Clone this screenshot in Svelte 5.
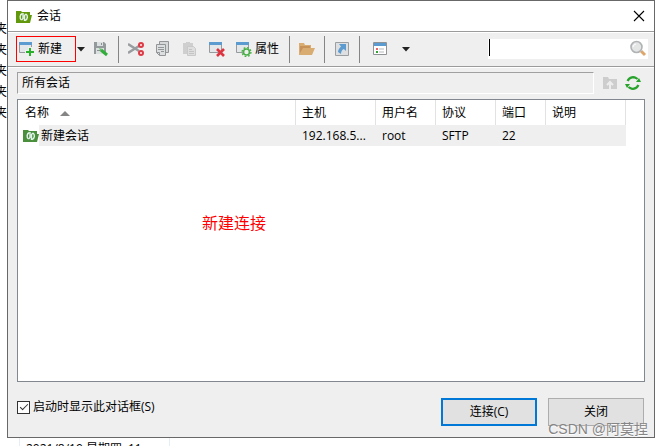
<script>
  let query = '';
  let showOnStart = true;

  const backRows = [1, 2, 3, 4, 5];

  const sessions = [
    { name: '新建会话', host: '192.168.5...', user: 'root', protocol: 'SFTP', port: 22, note: '' },
  ];
</script>

{#snippet logo(color)}
  <svg width="16" height="13" viewBox="0 0 16 13" aria-hidden="true">
    <path d="M0 1h5l1 1h8v3h2l-2 8H0z" fill={color} />
    <path d="M7 3v5.500L5.500 10M8.500 11V5.500L10 4" fill="none" stroke="#e2f3ee" stroke-width="1.400" />
    <path d="M6.500 3.500C3.500 4.500 3.500 8.500 5.500 10M9 10.500C12 9.500 12 5.500 10 4" fill="none" stroke="#e2f3ee" stroke-width="1.400" />
  </svg>
{/snippet}

<div class="desktop">
  <div class="behind-list">
    {#each backRows as row (row)}
      <span>夹</span>
    {/each}
  </div>

  <main class="dialog">
    <header class="titlebar">
      {@render logo('#62980c')}
      <h1>会话</h1>
      <button class="close" aria-label="关闭窗口">
        <svg width="12" height="12" viewBox="0 0 12 12"><path d="M1 1l10 10M11 1L1 11" stroke="#000" stroke-width="1.1" /></svg>
      </button>
    </header>

    <div class="toolbar">
      <button class="new">
        <svg width="16" height="16" viewBox="0 0 16 16">
          <path d="M.5 1.500h12v10H.5z" fill="#e4e7e9" stroke="#979b9d" />
          <path d="M0 1h13v3H0z" fill="#5b9bd0" />
          <path d="M11 6v9M6 11h9" stroke="#efefef" stroke-width="4" />
          <path d="M11 7v8M7 11h8" stroke="#2bb02b" stroke-width="2" />
        </svg>
        新建
      </button>
      <button class="drop" aria-label="新建选项">
        <svg width="8" height="5" viewBox="0 0 8 5"><path d="M0 0h8L4 4.500z" fill="#222" /></svg>
      </button>
      <button class="tool" aria-label="另存为">
        <svg width="16" height="16" viewBox="0 0 16 16">
          <path d="M1 1h10l2 2v10H1z" fill="#94999b" />
          <path d="M4 1h6v4H4zM3 7h8v6H3z" fill="#dde0e1" />
          <path d="M8 2h1v2H8zM4 9h6v1H4z" fill="#8a8f91" />
          <path d="M8 9l6 5" stroke="#32ae3b" stroke-width="3" />
          <path d="M6 7l3.500 1L7.500 10z" fill="#62c46a" />
        </svg>
      </button>
      <i class="sep"></i>
      <button class="tool" aria-label="剪切">
        <svg width="16" height="16" viewBox="0 0 16 16">
          <path d="M0 3l11 7M0 12l11-7" stroke="#999d9f" stroke-width="2.400" />
          <circle cx="13" cy="4" r="2" fill="none" stroke="#dd3a45" stroke-width="2" />
          <circle cx="13" cy="12" r="2" fill="none" stroke="#dd3a45" stroke-width="2" />
        </svg>
      </button>
      <button class="tool" aria-label="复制">
        <svg width="16" height="16" viewBox="0 0 16 16">
          <path d="M4.500.500h9v11h-9z" fill="#d5d7d8" stroke="#929698" />
          <path d="M1.500 3.500h9v11h-6l-3-3z" fill="#dcdedf" stroke="#929698" />
          <path d="M3 6.500h6M3 8.500h6M6 10.500h3M1.500 11.500h3v3" stroke="#929698" fill="none" />
        </svg>
      </button>
      <button class="tool" aria-label="粘贴" disabled>
        <svg width="16" height="16" viewBox="0 0 16 16">
          <path d="M1 2h3V1h4v1h3v11H1z" fill="#cfcfcf" />
          <path d="M5.500 5.500h6l2 2v7h-8z" fill="#dedede" stroke="#c9c9c9" />
          <path d="M7 8.500h3M7 10.500h5M7 12.500h5" stroke="#c4c4c4" />
        </svg>
      </button>
      <button class="tool" aria-label="删除">
        <svg width="16" height="16" viewBox="0 0 16 16">
          <path d="M.5 1.500h12v10H.5z" fill="#e4e7e9" stroke="#979b9d" />
          <path d="M0 1h13v3H0z" fill="#5b9bd0" />
          <path d="M8 8l7 7M15 8l-7 7" stroke="#dc3440" stroke-width="2.600" />
        </svg>
      </button>
      <button class="tool labelled">
        <svg width="16" height="16" viewBox="0 0 16 16">
          <path d="M.5 1.500h12v10H.5z" fill="#e4e7e9" stroke="#979b9d" />
          <path d="M0 1h13v3H0z" fill="#5b9bd0" />
          <circle cx="10.500" cy="11" r="3" fill="#efefef" stroke="#49b047" stroke-width="1.600" />
          <circle cx="10.500" cy="11" r="4.400" fill="none" stroke="#49b047" stroke-width="1.400" stroke-dasharray="1.700 1.750" />
        </svg>
        属性
      </button>
      <i class="sep"></i>
      <button class="tool" aria-label="打开文件夹">
        <svg width="16" height="16" viewBox="0 0 16 16">
          <path d="M0 2h5l1 2h6v3h4l-3 7H0z" fill="#d9ac72" />
          <path d="M1 5h10v2H4l-3 5z" fill="#c7915a" />
        </svg>
      </button>
      <i class="sep"></i>
      <button class="tool" aria-label="快捷方式">
        <svg width="16" height="16" viewBox="0 0 16 16">
          <path d="M1.500 1.500h13v13h-13z" fill="#dedfe0" stroke="#9b9fa1" />
          <path d="M5 3h7v7L9.800 8c-2 1-2.600 2.500-2.800 5L4 11c.3-2.500 1.300-4 3-5.500z" fill="#5b9bd0" />
        </svg>
      </button>
      <i class="sep"></i>
      <button class="tool view" aria-label="视图">
        <svg width="16" height="16" viewBox="0 0 16 16">
          <path d="M1.500 1.500h13v12h-13z" fill="#fff" stroke="#8f9395" />
          <path d="M2 2h12v3H2z" fill="#5b9bd0" />
          <path d="M4 7h2v2H4z" fill="#ed6464" />
          <path d="M4 10h2v2H4z" fill="#2fa32f" />
          <path d="M7 8h5M7 11h5" stroke="#b5b8b9" />
        </svg>
      </button>
      <button class="drop wide" aria-label="视图选项">
        <svg width="8" height="5" viewBox="0 0 8 5"><path d="M0 0h8L4 4.500z" fill="#222" /></svg>
      </button>
      <div class="search">
        <i class="caret"></i>
        <input type="text" bind:value={query} aria-label="搜索" />
        <svg width="18" height="18" viewBox="0 0 18 18" aria-hidden="true">
          <path d="M11 11l4 4" stroke="#dda66b" stroke-width="3" />
          <circle cx="6.500" cy="7" r="5.500" fill="#e4e5e5" stroke="#b0b3b4" stroke-width="1.600" />
          <path d="M3 7a3.500 3.500 0 0 1 3-3" stroke="#fff" fill="none" />
        </svg>
      </div>
    </div>

    <section class="content">
      <div class="pathbar">
        <div class="path">所有会话</div>
        <button class="up" aria-label="上一级" disabled>
          <svg width="16" height="16" viewBox="0 0 16 16">
            <path d="M1 2h5l1 2h8v10H1z" fill="#cdcdcd" />
            <path d="M8 14V8M5 10l3-3 3 3" stroke="#ededed" stroke-width="2" fill="none" />
          </svg>
        </button>
        <button aria-label="刷新">
          <svg width="16" height="16" viewBox="0 0 16 16">
            <path d="M2.600 6A6 5.800 0 0 1 12.500 4M13.400 10A6 5.800 0 0 1 3.500 12M5.500 2.800A6 5.800 0 0 1 11 3M10.500 13.200A6 5.800 0 0 1 5 13" fill="none" stroke="#27a22a" stroke-width="2.200" />
            <path d="M11 7h5l-2-4zM5 9H0l2 4z" fill="#27a22a" />
          </svg>
        </button>
      </div>

      <div class="list">
        <table>
          <thead>
            <tr>
              <th class="name">名称 <svg width="10" height="5" viewBox="0 0 10 5" aria-hidden="true"><path d="M0 5h10L5 0z" fill="#858585" /></svg></th>
              <th class="host">主机</th>
              <th class="mid">用户名</th>
              <th class="mid">协议</th>
              <th class="port">端口</th>
              <th class="host">说明</th>
            </tr>
          </thead>
          <tbody>
            {#each sessions as s (s.name)}
              <tr>
                <td class="session">
                  <div>{@render logo('#4a8f3c')}<span>{s.name}</span></div>
                </td>
                <td>{s.host}</td>
                <td>{s.user}</td>
                <td>{s.protocol}</td>
                <td>{s.port}</td>
                <td>{s.note}</td>
              </tr>
            {/each}
          </tbody>
        </table>
        <p class="annotation">新建连接</p>
      </div>

      <footer>
        <label>
          <input type="checkbox" bind:checked={showOnStart} />
          启动时显示此对话框(S)
        </label>
        <div class="actions">
          <button class="primary">连接(C)</button>
          <button>关闭</button>
          <span class="watermark">CSDN @阿莫捏</span>
        </div>
      </footer>
    </section>
  </main>

  <div class="behind-row"><span>2021/8/19 星期四&ensp;11...</span></div>
</div>

<style>
  :global(body) {
    background: #fff;
  }

  .desktop {
    display: grid;
    grid-template-columns: 7px minmax(0, 1fr);
    grid-template-rows: minmax(0, 1fr) 8px;
    height: 100vh;
    padding-right: 8px;
    box-sizing: border-box;
    overflow: hidden;
    font-family: 'Open Sans', 'Noto Sans CJK SC', sans-serif;
    font-size: 12px;
    line-height: 16px;
    color: #000;
  }

  .behind-list {
    display: flex;
    flex-direction: column;
    align-items: flex-end;
    padding-top: 18px;
    overflow: hidden;
  }

  .behind-list span {
    line-height: 21px;
  }

  .behind-row {
    grid-column: 2;
    display: flex;
    margin-left: 12px;
    width: 151px;
    overflow: hidden;
    box-sizing: border-box;
    border: solid #e5eef7;
    border-width: 0 1px;
    padding: 3px 6px 0;
    white-space: nowrap;
  }

  .dialog {
    display: flex;
    flex-direction: column;
    border: 1px solid #686868;
    background: #efefef;
    min-width: 0;
  }

  button {
    border: 0;
    padding: 0;
    background: none;
    font: inherit;
    color: inherit;
    display: flex;
    align-items: center;
    justify-content: center;
  }

  svg {
    flex: none;
  }

  .titlebar {
    display: flex;
    align-items: center;
    height: 30px;
    padding: 0 9px 0 8px;
    background: #fff;
  }

  h1 {
    margin: 0 auto 0 5px;
    font-size: 12px;
    font-weight: 400;
  }

  .toolbar {
    display: flex;
    align-items: center;
    height: 34px;
    padding: 0 6px 0 8px;
    border-top: 1px solid #9b9b9b;
    border-bottom: 1px solid #9b9b9b;
    box-shadow: inset 0 1px #fff, 0 1px #fff;
  }

  .new {
    width: 60px;
    height: 26px;
    box-sizing: border-box;
    border: 1px solid #ff0000;
    justify-content: flex-start;
    gap: 3px;
    padding-left: 2px;
    white-space: nowrap;
  }

  .drop {
    width: 9px;
    height: 24px;
  }

  .wide {
    width: 25px;
  }

  .tool {
    width: 27px;
    height: 24px;
  }

  .drop + .tool {
    margin-left: 2px;
  }

  .labelled {
    width: 55px;
    gap: 3px;
    white-space: nowrap;
  }

  .view {
    margin-left: 3px;
  }

  .sep {
    width: 1px;
    height: 27px;
    margin: 0 3px 0 4px;
    background: #858585;
  }

  .search {
    display: flex;
    align-items: center;
    width: 160px;
    height: 20px;
    margin-left: auto;
    background: #fff;
  }

  .caret {
    width: 1px;
    height: 17px;
    margin-left: 1px;
    align-self: flex-start;
    background: #000;
  }

  .search input {
    flex: 1;
    min-width: 0;
    border: 0;
    padding: 0 4px;
    background: none;
    font: inherit;
    outline: none;
  }

  .content {
    flex: 1;
    display: flex;
    flex-direction: column;
    padding: 5px 9px 11px;
    min-height: 0;
  }

  .pathbar {
    display: flex;
    align-items: center;
    gap: 7px;
    padding-right: 4px;
  }

  .path {
    flex: 1;
    height: 20px;
    line-height: 20px;
    padding-left: 4px;
    border: 1px solid #a0a0a0;
    border-right-color: #fff;
    border-bottom-color: #fff;
  }

  .up {
    margin-left: 1px;
  }

  .list {
    flex: 1;
    position: relative;
    margin-top: 5px;
    border: 1px solid #828790;
    background: #fff;
    padding-right: 18px;
    min-height: 100px;
  }

  table {
    width: 100%;
    table-layout: fixed;
    border-collapse: separate;
    border-spacing: 0;
  }

  th,
  td {
    box-sizing: border-box;
    padding: 0 0 0 6px;
    text-align: left;
    font-weight: 400;
    white-space: nowrap;
  }

  th {
    height: 25px;
    border-right: 1px solid #e2e2e2;
  }

  .name {
    padding-left: 7px;
  }

  .name svg {
    margin-left: 8px;
    vertical-align: 1px;
  }

  .host {
    width: 80px;
  }

  .mid {
    width: 60px;
  }

  .port {
    width: 50px;
  }

  td {
    height: 21px;
    background: #efefef;
  }

  td.session {
    background: none;
    padding-left: 5px;
  }

  .session div {
    display: flex;
    align-items: center;
  }

  .session span {
    flex: 1;
    line-height: 21px;
    padding-left: 2px;
    background: #efefef;
  }

  .annotation {
    position: absolute;
    left: 184px;
    top: 111px;
    margin: 0;
    font-size: 16px;
    line-height: 24px;
    color: #f00;
  }

  footer {
    display: flex;
    justify-content: space-between;
    margin-top: 16px;
  }

  label {
    display: flex;
    align-items: center;
    gap: 3px;
    height: 18px;
  }

  label input {
    appearance: none;
    box-sizing: border-box;
    width: 13px;
    height: 13px;
    margin: 0;
    border: 1px solid #333;
    background: #fff;
    display: grid;
    place-items: center;
  }

  label input:checked::before {
    content: '';
    width: 7px;
    height: 3px;
    border: solid #333;
    border-width: 0 0 1px 1px;
    transform: translateY(-1px) rotate(-45deg);
  }

  .actions {
    position: relative;
    display: flex;
    gap: 11px;
    padding-right: 1px;
  }

  .actions button {
    width: 96px;
    height: 28px;
    box-sizing: border-box;
    border: 1px solid #adadad;
    background: #e1e1e1;
  }

  .actions .primary {
    border: 2px solid #0078d7;
  }

  .watermark {
    position: absolute;
    right: -3px;
    top: 21px;
    font-family: 'Liberation Sans', 'Noto Sans CJK SC', sans-serif;
    font-size: 14px;
    line-height: 20px;
    color: #858585;
    text-shadow: 0 1px 1px #fff;
    white-space: nowrap;
    pointer-events: none;
  }
</style>
